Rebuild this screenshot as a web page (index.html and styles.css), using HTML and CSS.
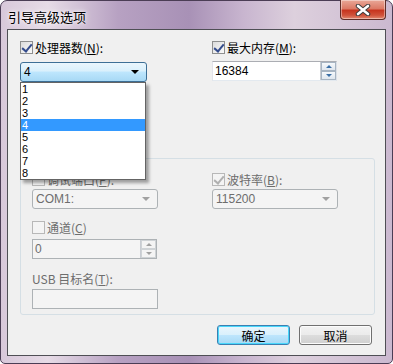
FILE: index.html
```html
<!DOCTYPE html>
<html lang="zh">
<head>
  <meta charset="UTF-8" />
  <title>引导高级选项</title>
  <link rel="stylesheet" href="styles.css">
</head>
<body>
  <div class="window">
    <div class="titlebar">
      <span class="title">引导高级选项</span>
      <button class="close">
        <svg width="16" height="12" viewBox="0 0 16 12">
          <path d="M3 2 L13 10 M13 2 L3 10" stroke="#3b3b3b" stroke-width="4.5" stroke-linecap="round"/>
          <path d="M3 2 L13 10 M13 2 L3 10" stroke="#ffffff" stroke-width="2.6" stroke-linecap="round"/>
        </svg>
      </button>
    </div>

    <div class="client">
      <div class="top">
        <div class="col">
          <label class="check"><span class="box checked"></span>处理器数(<u>N</u>):</label>
          <div class="combo-wrap">
            <div class="combo open"><span>4</span><span class="arrow"></span></div>
            <ul class="droplist">
              <li>1</li>
              <li>2</li>
              <li>3</li>
              <li class="sel">4</li>
              <li>5</li>
              <li>6</li>
              <li>7</li>
              <li>8</li>
            </ul>
          </div>
        </div>
        <div class="col">
          <label class="check"><span class="box checked"></span>最大内存(<u>M</u>):</label>
          <div class="spin mem">
            <span class="val">16384</span>
            <span class="spinbtns"><span class="up"></span><span class="down"></span></span>
          </div>
        </div>
      </div>

      <div class="group">
        <div class="grow">
          <div class="gcol">
            <label class="check dis"><span class="box"></span>调试端口(<u>P</u>):</label>
            <div class="combo disabled"><span>COM1:</span><span class="arrow"></span></div>
            <label class="check dis chan"><span class="box"></span>通道(<u>C</u>)</label>
            <div class="spin disabled">
              <span class="val">0</span>
              <span class="spinbtns"><span class="up"></span><span class="down"></span></span>
            </div>
            <div class="lbl">USB 目标名(<u>T</u>):</div>
            <div class="textbox"></div>
          </div>
          <div class="gcol">
            <label class="check dis"><span class="box checked"></span>波特率(<u>B</u>):</label>
            <div class="combo disabled"><span>115200</span><span class="arrow"></span></div>
          </div>
        </div>
      </div>

      <div class="actions">
        <button class="btn default">确定</button>
        <button class="btn">取消</button>
      </div>
    </div>
  </div>
</body>
</html>
```

FILE: styles.css
```css
body {
  margin: 0;
  background: #ffffff;
  font-family: "Liberation Sans", "Noto Sans CJK SC", sans-serif;
  font-size: 12px;
}
.window {
  width: 393px;
  height: 364px;
  box-sizing: border-box;
  border: 1px solid #4b3d55;
  border-radius: 7px 7px 5px 5px;
  background: linear-gradient(90deg, #d8c8da 0%, #e6dbe6 12%, #b7a1c2 30%, #a891b6 48%, #c8b5cf 62%, #ddd0dd 75%, #cbb9d0 100%);
  display: flex;
  flex-direction: column;
}
.titlebar {
  height: 28px;
  display: flex;
  align-items: flex-start;
  justify-content: space-between;
}
.title {
  margin: 6px 0 0 7px;
  font-family: "Noto Sans CJK SC", sans-serif;
  font-size: 13px;
  color: #000;
  text-shadow: 0 0 6px #fff, 0 0 3px #fff;
}
.close {
  width: 46px;
  height: 20px;
  margin: -1px 6px 0 0;
  border: 1px solid #5f2d28;
  border-top: none;
  border-radius: 0 0 4px 4px;
  background: linear-gradient(#e9a898 0%, #dc7a66 45%, #c7351f 55%, #d0523a 80%, #e38a72 100%);
  box-shadow: inset 0 0 0 1px rgba(255, 255, 255, 0.4);
  display: flex;
  justify-content: center;
  align-items: center;
  padding: 0;
}
.client {
  flex: 1;
  margin: 0 6px 7px 6px;
  border: 1px solid #4f4f55;
  background: #f0f0f0;
  display: flex;
  flex-direction: column;
}
.top {
  height: 128px;
  box-sizing: border-box;
  padding: 10px 0 0 12px;
  display: flex;
}
.col {
  width: 192px;
  flex: none;
  display: flex;
  flex-direction: column;
}
.check {
  display: flex;
  align-items: center;
  height: 14px;
  font-family: "Noto Sans CJK SC", sans-serif;
  font-size: 12px;
  color: #000;
  white-space: nowrap;
}
.check.dis,
.lbl {
  color: #6d6d6d;
}
.box {
  width: 11px;
  height: 11px;
  border: 1px solid #8e8f8f;
  background: linear-gradient(135deg, #dcdcdc, #fafafa);
  margin-right: 2px;
  position: relative;
  flex: none;
}
.box.checked::after {
  content: "";
  position: absolute;
  left: 3px;
  top: 0;
  width: 4px;
  height: 8px;
  border: solid #344c8c;
  border-width: 0 2px 2px 0;
  transform: rotate(40deg);
}
.dis .box {
  border-color: #b8b8b8;
  background: #f4f4f4;
}
.dis .box.checked::after {
  border-color: #b0b0b0;
}
.combo-wrap {
  position: relative;
  margin-top: 8px;
  width: 127px;
}
.combo {
  height: 20px;
  box-sizing: border-box;
  border: 1px solid #b0b4b8;
  border-radius: 3px;
  display: flex;
  align-items: center;
  justify-content: space-between;
  padding: 0 7px 0 3px;
  font-size: 12px;
}
.combo.open {
  border-color: #3d6f96;
  background: linear-gradient(#eaf6fd 0%, #d9f0fc 45%, #bee6fd 50%, #a7d9f5 100%);
}
.arrow {
  width: 0;
  height: 0;
  border-left: 4px solid transparent;
  border-right: 4px solid transparent;
  border-top: 4px solid #000;
}
.combo.disabled {
  width: 126px;
  margin-top: 3px;
  background: #f4f4f4;
  border-color: #adb2b5;
  color: #6d6d6d;
}
.combo.disabled .arrow {
  border-top-color: #a0a0a0;
}
.droplist {
  position: absolute;
  top: 20px;
  left: 0;
  width: 126px;
  margin: 0;
  padding: 0;
  list-style: none;
  background: #fff;
  border: 1px solid #646464;
  box-sizing: border-box;
  box-shadow: 3px 3px 3px rgba(0, 0, 0, 0.35);
  z-index: 2;
}
.droplist li {
  height: 12px;
  line-height: 12px;
  padding-left: 1px;
  font-size: 11px;
}
.droplist li.sel {
  background: #3399ff;
  color: #fff;
}
.spin {
  margin-top: 7px;
  width: 125px;
  height: 20px;
  box-sizing: border-box;
  border: 1px solid #abadb3;
  border-color: #abadb3 #dbdfe6 #e3e9ef #e2e3ea;
  background: #fff;
  display: flex;
  align-items: center;
  justify-content: space-between;
  padding-left: 2px;
}
.spinbtns {
  width: 16px;
  height: 18px;
  display: flex;
  flex-direction: column;
  border-left: 1px solid #c8ccd2;
  box-sizing: border-box;
}
.spinbtns span {
  flex: 1;
  position: relative;
  background: linear-gradient(#f5f8fb, #dfe6ee);
  border: 1px solid #a7b4c2;
  box-sizing: border-box;
}
.spinbtns span::after {
  content: "";
  position: absolute;
  left: 4px;
  top: 2px;
  border-left: 3px solid transparent;
  border-right: 3px solid transparent;
}
.spinbtns .up::after {
  border-bottom: 3px solid #3a6ea5;
}
.spinbtns .down::after {
  border-top: 3px solid #3a6ea5;
}
.spin.disabled {
  background: #f4f4f4;
  border-color: #adb2b5;
  color: #6d6d6d;
  margin-top: 5px;
}
.spin.disabled .spinbtns span {
  background: #f4f4f4;
  border-color: #cfd3d6;
}
.spin.disabled .spinbtns .up::after {
  border-bottom-color: #a0a0a0;
}
.spin.disabled .spinbtns .down::after {
  border-top-color: #a0a0a0;
}
.group {
  margin-left: 12px;
  width: 355px;
  height: 157px;
  box-sizing: border-box;
  border: 1px solid #d5dfe5;
  border-radius: 3px;
  padding: 13px 0 0 11px;
}
.grow {
  display: flex;
}
.gcol {
  width: 180px;
  flex: none;
  display: flex;
  flex-direction: column;
}
.chan {
  margin-top: 11px;
}
.lbl {
  margin-top: 13px;
  height: 14px;
  line-height: 14px;
  font-family: "Noto Sans CJK SC", sans-serif;
  white-space: nowrap;
}
.textbox {
  margin-top: 3px;
  width: 126px;
  height: 20px;
  box-sizing: border-box;
  border: 1px solid #adb2b5;
  background: #f4f4f4;
}
.actions {
  display: flex;
  justify-content: flex-end;
  gap: 9px;
  padding: 10px 13px 0 0;
}
.btn {
  width: 73px;
  height: 20px;
  padding: 0;
  border: 1px solid #707070;
  border-radius: 3px;
  background: linear-gradient(#f2f2f2 0%, #ebebeb 49%, #dddddd 50%, #cfcfcf 100%);
  box-shadow: inset 0 0 0 1px #fcfcfc;
  font-family: "Noto Sans CJK SC", sans-serif;
  font-size: 12px;
  color: #000;
}
.btn.default {
  border-color: #3c7fb1;
  box-shadow: inset 0 0 0 1px #48d7fb;
  background: linear-gradient(#eaf6fd 0%, #d9f0fc 49%, #bee6fd 50%, #a7d9f5 100%);
}
```
